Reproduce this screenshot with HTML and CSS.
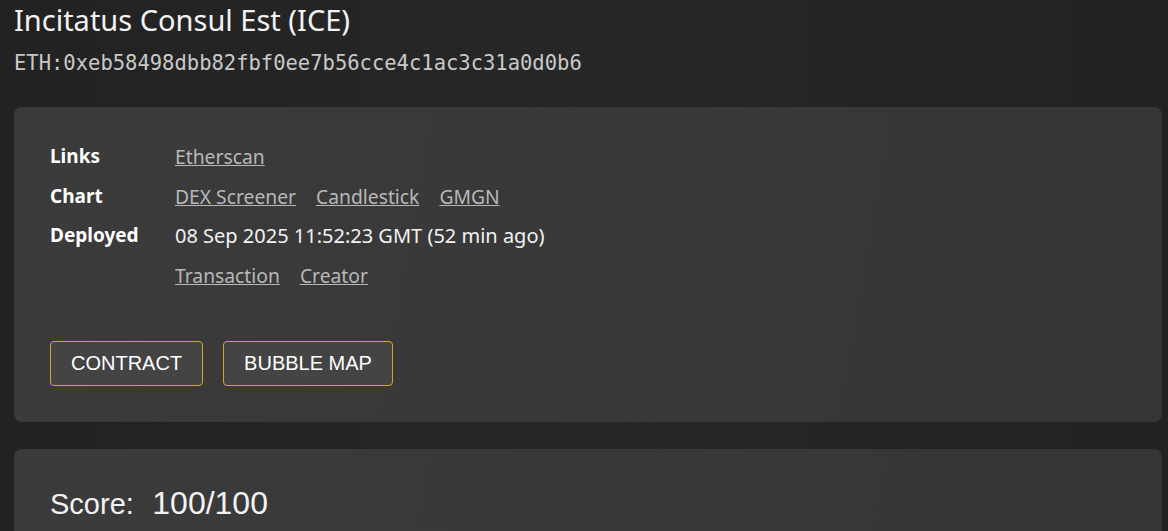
FILE: index.html
```html
<!DOCTYPE html>
<html>
    <head>
        <title>Incitatus Consul Est (ICE)</title>
        <meta charset="UTF-8">
        <link rel="stylesheet" href="styles.css">
    </head>
    <body>
        <div id="page">
            <h2 id="token_name">Incitatus Consul Est (ICE)</h2>
            <div id="address">ETH:0xeb58498dbb82fbf0ee7b56cce4c1ac3c31a0d0b6</div>

            <div class="card" id="info">
                <div class="row">
                    <div class="label">Links</div>
                    <div class="value"><a href="#">Etherscan</a></div>
                </div>
                <div class="row">
                    <div class="label">Chart</div>
                    <div class="value">
                        <a href="#">DEX Screener</a>
                        <a href="#">Candlestick</a>
                        <a href="#">GMGN</a>
                    </div>
                </div>
                <div class="row">
                    <div class="label">Deployed</div>
                    <div class="value">08 Sep 2025 11:52:23 GMT (52 min ago)</div>
                </div>
                <div class="row">
                    <div class="label"></div>
                    <div class="value">
                        <a href="#">Transaction</a>
                        <a href="#">Creator</a>
                    </div>
                </div>
                <div id="buttons">
                    <button type="button">CONTRACT</button>
                    <button type="button">BUBBLE MAP</button>
                </div>
            </div>

            <div class="card" id="score_card">
                <span class="score_label">Score:</span>
                <span class="score_value">100/100</span>
            </div>
        </div>
    </body>
</html>
```

FILE: styles.css
```css
body {
    margin: 0;
    font-family: "Noto Sans", sans-serif;
    color: #f2f2f2;
    background: linear-gradient(90deg, #222222, #272727 50%, #222222);
    overflow: hidden;
}
#page {
    padding: 0 6px 0 14px;
    height: 531px;
}
#token_name {
    font-weight: normal;
    font-size: 29px;
    margin: 0;
    padding-top: 2px;
    line-height: 36px;
}
#address {
    font-family: "DejaVu Sans Mono", monospace;
    font-size: 20.5px;
    color: #c9c9c9;
    margin-top: 10px;
    line-height: 30px;
}
.card {
    background: linear-gradient(100deg, #3b3b3b, #383838 60%, #353535);
    border-radius: 8px;
}
#info {
    margin-top: 29px;
    padding: 30px 36px 36px 36px;
}
.row {
    display: flex;
    line-height: 39.5px;
}
.label {
    width: 125px;
    font-size: 19px;
    font-weight: bold;
    color: #ffffff;
}
.value {
    display: flex;
    gap: 20px;
    font-size: 20px;
}
.value a {
    font-size: 19.3px;
    color: #b8b8b8;
}
#buttons {
    display: flex;
    gap: 20px;
    margin-top: 46px;
}
button {
    font-family: "Liberation Sans", Arial, sans-serif;
    font-size: 20px;
    color: #ffffff;
    background-color: #444444;
    border: 1px solid #d2a62c;
    border-radius: 4px;
    height: 45px;
    padding: 0 20px;
}
#score_card {
    margin-top: 27px;
    padding: 36px 36px;
    height: 200px;
    font-family: "Liberation Sans", Arial, sans-serif;
}
.score_label {
    font-size: 29px;
    margin-right: 14px;
}
.score_value {
    font-size: 32px;
}
```
